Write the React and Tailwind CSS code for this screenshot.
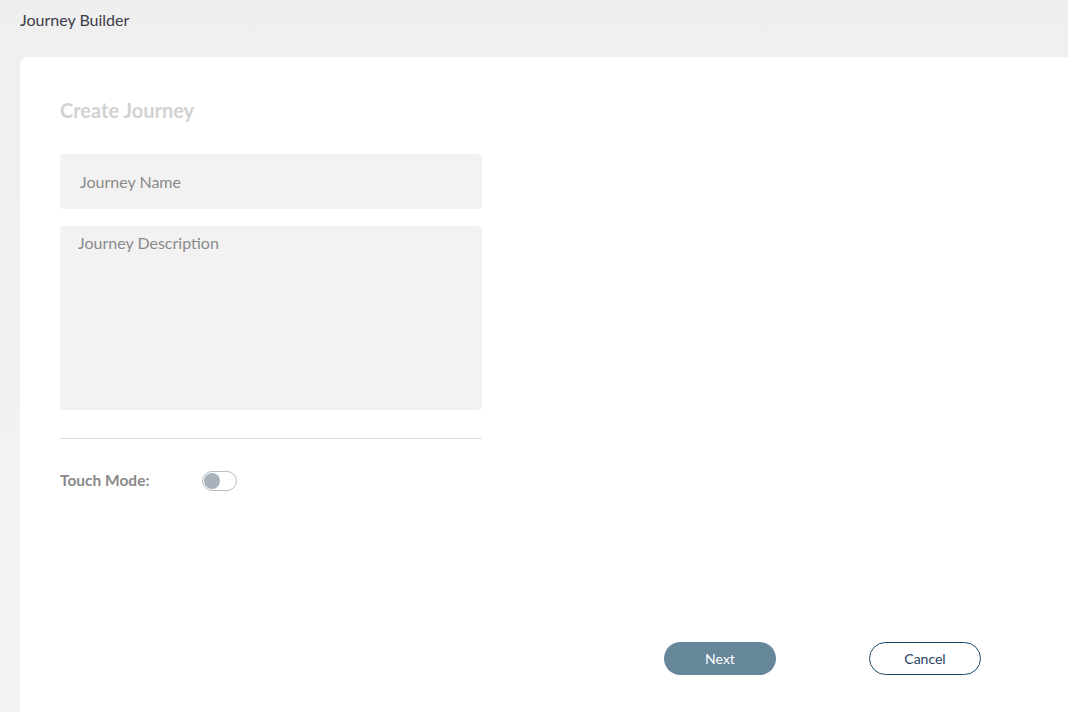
export default function App() {
  return (
    <div className="h-[712px] overflow-hidden bg-gradient-to-b from-[#efefef] to-[#f3f3f3] font-['Lato','Liberation_Sans',sans-serif]">
      <header className="h-[57px] px-5 pt-[9px]">
        <h1 className="text-[16px] leading-[22px] text-[#3b3b48]">Journey Builder</h1>
      </header>

      <main className="ml-5 h-[680px] rounded-l-lg bg-white pl-10 pt-[38px]">
        <h2 className="h-[59px] text-[20px] leading-[30px] font-bold text-[#d2d2d2]">Create Journey</h2>

        <div className="w-[422px]">
          <input
            className="block h-[55px] w-full rounded bg-[#f2f2f2] px-5 text-[16px] text-[#555] placeholder:text-[#8a8a8a] outline-none"
            placeholder="Journey Name"
          />
          <textarea
            className="mt-[17px] block h-[184px] w-full resize-none rounded bg-[#f2f2f2] px-[18px] py-[5px] text-[16px] text-[#555] placeholder:text-[#8a8a8a] outline-none"
            placeholder="Journey Description"
          />
          <div className="mt-7 border-t border-[#dcdcdc]" />

          <div className="mt-[30px] flex items-center">
            <span className="w-[142px] text-[15.5px] font-bold text-[#8a8a8a]">Touch Mode:</span>
            <button className="flex h-[20px] w-[35px] items-center rounded-full border border-[#b8bec6] bg-white px-[1px]">
              <span className="h-4 w-4 rounded-full bg-[#a9b1bb]" />
            </button>
          </div>
        </div>

        <div className="mt-[150px] ml-[604px] flex gap-[93px]">
          <button className="h-[33px] w-[112px] rounded-full bg-[#66869a] text-[14px] text-white">Next</button>
          <button className="h-[33px] w-[112px] rounded-full border border-[#1d4a6a] bg-white text-[14px] text-[#1d3f5e]">Cancel</button>
        </div>
      </main>
    </div>
  )
}
